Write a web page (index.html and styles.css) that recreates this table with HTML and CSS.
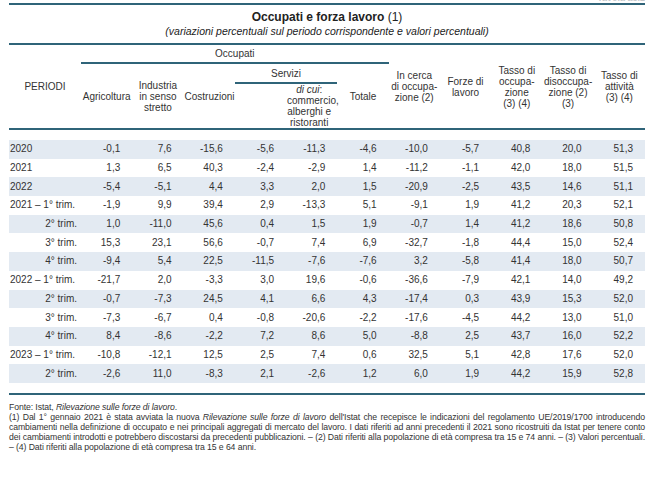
FILE: index.html
```html
<!DOCTYPE html>
<html lang="it">
<head>
<meta charset="utf-8">
<link rel="stylesheet" href="styles.css">
</head>
<body>
<div class="page">
  <div class="tag"><span>Tavola a5.2</span></div>
  <header class="caption">
    <div class="title"><b>Occupati e forza lavoro</b> (1)</div>
    <div class="subtitle">(variazioni percentuali sul periodo corrispondente e valori percentuali)</div>
  </header>
  <table class="data">
    <colgroup>
      <col class="c-per">
      <col span="11" class="c-num">
    </colgroup>
    <thead>
      <tr class="h1">
        <th rowspan="3" class="bot">PERIODI</th>
        <th colspan="6" class="grp">Occupati</th>
        <th rowspan="3" class="bot">In cerca<br>di occupa-<br>zione (2)</th>
        <th rowspan="3" class="bot">Forze di<br>lavoro</th>
        <th rowspan="3" class="bot">Tasso di<br>occupa-<br>zione<br>(3) (4)</th>
        <th rowspan="3" class="bot">Tasso di<br>disoccupa-<br>zione (2)<br>(3)</th>
        <th rowspan="3" class="bot">Tasso di<br>attività<br>(3) (4)</th>
      </tr>
      <tr class="h2">
        <th rowspan="2" class="bot">Agricoltura</th>
        <th rowspan="2" class="bot">Industria<br>in senso<br>stretto</th>
        <th rowspan="2" class="bot">Costruzioni</th>
        <th colspan="2" class="grp">Servizi</th>
        <th rowspan="2" class="bot">Totale</th>
      </tr>
      <tr class="h3">
        <th class="bot"></th>
        <th class="bot dicui"><i>di cui</i>:<br>commercio,<br>alberghi e<br>ristoranti</th>
      </tr>
    </thead>
    <tbody>
      <tr class="gap"><td colspan="12"></td></tr>
      <tr class="alt"><td class="per">2020</td><td>-0,1</td><td>7,6</td><td>-15,6</td><td>-5,6</td><td>-11,3</td><td>-4,6</td><td>-10,0</td><td>-5,7</td><td>40,8</td><td>20,0</td><td>51,3</td></tr>
      <tr><td class="per">2021</td><td>1,3</td><td>6,5</td><td>40,3</td><td>-2,4</td><td>-2,9</td><td>1,4</td><td>-11,2</td><td>-1,1</td><td>42,0</td><td>18,0</td><td>51,5</td></tr>
      <tr class="alt"><td class="per">2022</td><td>-5,4</td><td>-5,1</td><td>4,4</td><td>3,3</td><td>2,0</td><td>1,5</td><td>-20,9</td><td>-2,5</td><td>43,5</td><td>14,6</td><td>51,1</td></tr>
      <tr><td class="per">2021 – 1° trim.</td><td>-1,9</td><td>9,9</td><td>39,4</td><td>2,9</td><td>-13,3</td><td>5,1</td><td>-9,1</td><td>1,9</td><td>41,2</td><td>20,3</td><td>52,1</td></tr>
      <tr class="alt"><td class="per q">2° trim.</td><td>1,0</td><td>-11,0</td><td>45,6</td><td>0,4</td><td>1,5</td><td>1,9</td><td>-0,7</td><td>1,4</td><td>41,2</td><td>18,6</td><td>50,8</td></tr>
      <tr><td class="per q">3° trim.</td><td>15,3</td><td>23,1</td><td>56,6</td><td>-0,7</td><td>7,4</td><td>6,9</td><td>-32,7</td><td>-1,8</td><td>44,4</td><td>15,0</td><td>52,4</td></tr>
      <tr class="alt"><td class="per q">4° trim.</td><td>-9,4</td><td>5,4</td><td>22,5</td><td>-11,5</td><td>-7,6</td><td>-7,6</td><td>3,2</td><td>-5,8</td><td>41,4</td><td>18,0</td><td>50,7</td></tr>
      <tr><td class="per">2022 – 1° trim.</td><td>-21,7</td><td>2,0</td><td>-3,3</td><td>3,0</td><td>19,6</td><td>-0,6</td><td>-36,6</td><td>-7,9</td><td>42,1</td><td>14,0</td><td>49,2</td></tr>
      <tr class="alt"><td class="per q">2° trim.</td><td>-0,7</td><td>-7,3</td><td>24,5</td><td>4,1</td><td>6,6</td><td>4,3</td><td>-17,4</td><td>0,3</td><td>43,9</td><td>15,3</td><td>52,0</td></tr>
      <tr><td class="per q">3° trim.</td><td>-7,3</td><td>-6,7</td><td>0,4</td><td>-0,8</td><td>-20,6</td><td>-2,2</td><td>-17,6</td><td>-4,5</td><td>44,2</td><td>13,0</td><td>51,0</td></tr>
      <tr class="alt"><td class="per q">4° trim.</td><td>8,4</td><td>-8,6</td><td>-2,2</td><td>7,2</td><td>8,6</td><td>5,0</td><td>-8,8</td><td>2,5</td><td>43,7</td><td>16,0</td><td>52,2</td></tr>
      <tr><td class="per">2023 – 1° trim.</td><td>-10,8</td><td>-12,1</td><td>12,5</td><td>2,5</td><td>7,4</td><td>0,6</td><td>32,5</td><td>5,1</td><td>42,8</td><td>17,6</td><td>52,0</td></tr>
      <tr class="alt"><td class="per q">2° trim.</td><td>-2,6</td><td>11,0</td><td>-8,3</td><td>2,1</td><td>-2,6</td><td>1,2</td><td>6,0</td><td>1,9</td><td>44,2</td><td>15,9</td><td>52,8</td></tr>
      <tr class="gap"><td colspan="12"></td></tr>
    </tbody>
  </table>
  <div class="notes">
    <p>Fonte: Istat, <i>Rilevazione sulle forze di lavoro</i>.</p>
    <p>
      <span class="jl">(1) Dal 1° gennaio 2021 è stata avviata la nuova <i>Rilevazione sulle forze di lavoro</i> dell'Istat che recepisce le indicazioni del regolamento UE/2019/1700 introducendo</span>
      <span class="jl">cambiamenti nella definizione di occupato e nei principali aggregati di mercato del lavoro. I dati riferiti ad anni precedenti il 2021 sono ricostruiti da Istat per tenere conto</span>
      <span class="jl">dei cambiamenti introdotti e potrebbero discostarsi da precedenti pubblicazioni. – (2) Dati riferiti alla popolazione di età compresa tra 15 e 74 anni. – (3) Valori percentuali.</span>
      <span class="ll">– (4) Dati riferiti alla popolazione di età compresa tra 15 e 64 anni.</span>
    </p>
  </div>
</div>
</body>
</html>
```
FILE: styles.css
```css
html, body {
  margin: 0;
  padding: 0;
  background: #ffffff;
}
body {
  font-family: "Liberation Sans", Arial, Helvetica, sans-serif;
  color: #333333;
}
.page {
  width: 636px;
  margin-left: 9px;
}
.tag {
  height: 3px;
  overflow: hidden;
  text-align: right;
  font-size: 9px;
  font-weight: bold;
  color: #c4c8cc;
}
.tag span {
  display: block;
  line-height: 10px;
  margin-top: -7px;
}
.caption {
  border-top: 2px solid #2f6479;
  border-bottom: 2px solid #2f6479;
  padding: 5px 0 6px;
  text-align: center;
  color: #222222;
}
.title {
  font-size: 12px;
  line-height: 14px;
}
.title b {
  font-weight: bold;
}
.subtitle {
  font-size: 10.5px;
  line-height: 12px;
  font-style: italic;
  margin-top: 1px;
}
.data {
  width: 636px;
  table-layout: fixed;
  border-collapse: separate;
  border-spacing: 0;
  font-size: 10px;
}
.c-per { width: 72px; }
.c-num { width: 51.27px; }
.data th {
  font-weight: normal;
  line-height: 11px;
  text-align: center;
  vertical-align: middle;
  padding: 0 1px;
  color: #333333;
}
.data th.grp {
  border-bottom: 2px solid #2f6479;
}
.data th.bot {
  border-bottom: 2px solid #2f6479;
}
.h1 th.grp { height: 17px; }
.h2 th.grp { height: 18px; }
.h3 th { height: 44px; }
.data th.dicui {
  padding-right: 6px;
}
.data td {
  height: 18.7px;
  padding: 0 12px 0 0;
  text-align: right;
  vertical-align: middle;
  line-height: 12px;
  white-space: nowrap;
  color: #333333;
}
.data td.per {
  text-align: left;
  padding: 0 0 0 1px;
}
.data td.per.q {
  text-align: right;
  padding: 0 4px 0 0;
}
.data tr.alt td {
  background: #e3eaf2;
}
.data tr.gap td {
  height: 10px;
  padding: 0;
}
.data tbody tr.gap:last-child td {
  border-bottom: 2px solid #2f6479;
}
.notes {
  margin-top: 7px;
  font-size: 8.7px;
  letter-spacing: -0.1px;
  line-height: 10px;
  color: #333333;
}
.notes p {
  margin: 0;
}
.notes .jl {
  display: block;
  white-space: nowrap;
  text-align: justify;
  text-align-last: justify;
}
.notes .ll {
  display: block;
  white-space: nowrap;
}
```
